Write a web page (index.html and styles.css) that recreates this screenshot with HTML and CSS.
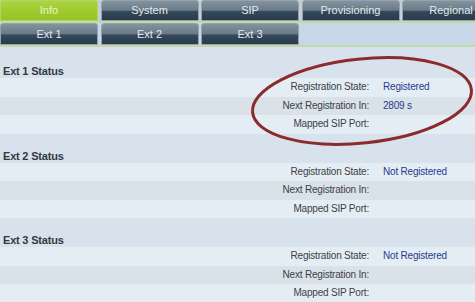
FILE: index.html
```html
<!DOCTYPE html>
<html lang="en">
<head>
  <meta charset="UTF-8">
  <title>Info - Ext Status</title>
  <link rel="stylesheet" href="styles.css">
</head>
<body>

  <div class="tabs main-tabs">
    <div class="tab active">Info</div>
    <div class="tab">System</div>
    <div class="tab">SIP</div>
    <div class="tab">Provisioning</div>
    <div class="tab">Regional</div>
  </div>

  <div class="tabs sub-tabs">
    <div class="tab">Ext 1</div>
    <div class="tab">Ext 2</div>
    <div class="tab">Ext 3</div>
  </div>

  <div id="status">
    <div class="section">
      <div class="heading">Ext 1 Status</div>
      <div class="row"><span class="label">Registration State:</span><span class="value">Registered</span></div>
      <div class="row"><span class="label">Next Registration In:</span><span class="value">2809 s</span></div>
      <div class="row"><span class="label">Mapped SIP Port:</span><span class="value"></span></div>
    </div>

    <div class="section">
      <div class="heading">Ext 2 Status</div>
      <div class="row"><span class="label">Registration State:</span><span class="value">Not Registered</span></div>
      <div class="row"><span class="label">Next Registration In:</span><span class="value"></span></div>
      <div class="row"><span class="label">Mapped SIP Port:</span><span class="value"></span></div>
    </div>

    <div class="section">
      <div class="heading">Ext 3 Status</div>
      <div class="row"><span class="label">Registration State:</span><span class="value">Not Registered</span></div>
      <div class="row"><span class="label">Next Registration In:</span><span class="value"></span></div>
      <div class="row"><span class="label">Mapped SIP Port:</span><span class="value"></span></div>
    </div>
  </div>

  <!-- annotation circle drawn over the Ext 1 values -->
  <svg class="mark" width="475" height="302" viewBox="0 0 475 302">
    <ellipse cx="362" cy="101" rx="110" ry="42" transform="rotate(-6 362 101)"
             fill="none" stroke="#8c2b2e" stroke-width="3"/>
  </svg>

</body>
</html>
```

FILE: styles.css
```css
body {
  margin: 0;
  width: 475px;
  height: 302px;
  overflow: hidden;
  position: relative;
  font-family: "Liberation Sans", Arial, sans-serif;
  background: #e5edf4;
}

.tabs {
  display: flex;
  gap: 2.5px;
  overflow: hidden;
  border-bottom: 2px solid #c4d9a6;
}

.main-tabs {
  height: 21px;
  background: #c3d0d8;
}

.sub-tabs {
  height: 22px;
  background: #c7d7e7;
}

.tab {
  flex: 0 0 98px;
  box-sizing: border-box;
  text-align: center;
  font-size: 11px;
  color: #e4eaee;
  border: 1px solid #93a2ad;
  border-radius: 3px 3px 0 0;
  background: linear-gradient(#8493a0 0%, #6a7a87 48%, #33485a 56%, #293c4c 100%);
}

.main-tabs .tab {
  line-height: 19px;
}

.sub-tabs .tab {
  line-height: 20px;
}

.tab.active {
  color: #e9f5c6;
  border-color: #b4d660;
  background: linear-gradient(#acd444 0%, #9fcb2e 50%, #97c326 100%);
}

.section .heading {
  height: 29px;
  box-sizing: border-box;
  padding: 16px 0 0 3px;
  line-height: 13px;
  font-size: 11px;
  font-weight: bold;
  letter-spacing: -0.2px;
  color: #33393f;
  background: #d8e2ec;
}

.section:first-child .heading {
  height: 31px;
  padding-top: 18px;
}

.row {
  display: flex;
  height: 18.5px;
  line-height: 18.5px;
  font-size: 10px;
  letter-spacing: -0.2px;
  background: #e5edf4;
}

.row:nth-child(3) {
  background: #dae2e9;
}

.label {
  width: 369px;
  text-align: right;
  color: #3a3f45;
}

.value {
  margin-left: 14px;
  color: #2a3b8e;
}

.mark {
  position: absolute;
  top: 0;
  left: 0;
  pointer-events: none;
}
```
